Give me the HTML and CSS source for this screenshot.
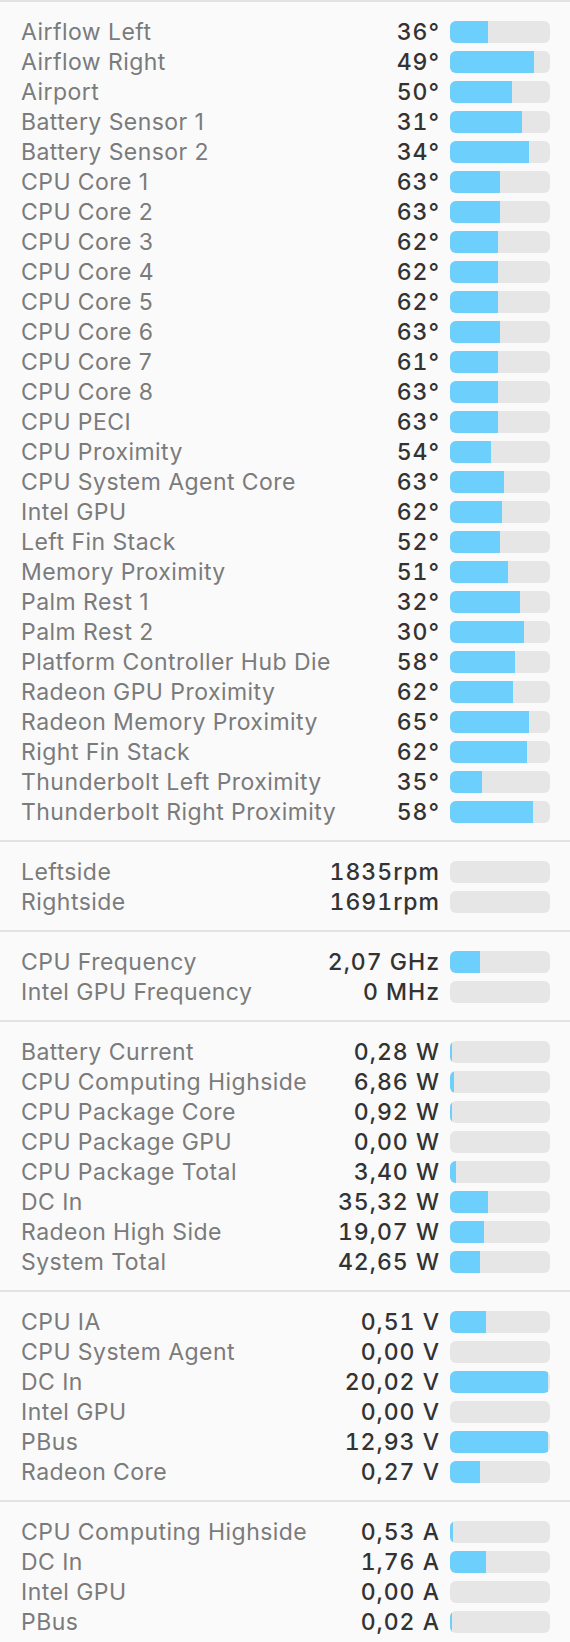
FILE: index.html
```html
<!DOCTYPE html>
<html lang="en">
<head>
<meta charset="utf-8">
<title>Sensors</title>
<link rel="stylesheet" href="styles.css">
</head>
<body>
<div class="panel">
  <section class="group">
    <div class="row"><span class="label">Airflow Left</span><span class="value">36°</span><div class="bar"><div class="fill" style="width:38%"></div></div></div>
    <div class="row"><span class="label">Airflow Right</span><span class="value">49°</span><div class="bar"><div class="fill" style="width:84%"></div></div></div>
    <div class="row"><span class="label">Airport</span><span class="value">50°</span><div class="bar"><div class="fill" style="width:62%"></div></div></div>
    <div class="row"><span class="label">Battery Sensor 1</span><span class="value">31°</span><div class="bar"><div class="fill" style="width:72%"></div></div></div>
    <div class="row"><span class="label">Battery Sensor 2</span><span class="value">34°</span><div class="bar"><div class="fill" style="width:79%"></div></div></div>
    <div class="row"><span class="label">CPU Core 1</span><span class="value">63°</span><div class="bar"><div class="fill" style="width:50%"></div></div></div>
    <div class="row"><span class="label">CPU Core 2</span><span class="value">63°</span><div class="bar"><div class="fill" style="width:50%"></div></div></div>
    <div class="row"><span class="label">CPU Core 3</span><span class="value">62°</span><div class="bar"><div class="fill" style="width:48%"></div></div></div>
    <div class="row"><span class="label">CPU Core 4</span><span class="value">62°</span><div class="bar"><div class="fill" style="width:48%"></div></div></div>
    <div class="row"><span class="label">CPU Core 5</span><span class="value">62°</span><div class="bar"><div class="fill" style="width:48%"></div></div></div>
    <div class="row"><span class="label">CPU Core 6</span><span class="value">63°</span><div class="bar"><div class="fill" style="width:50%"></div></div></div>
    <div class="row"><span class="label">CPU Core 7</span><span class="value">61°</span><div class="bar"><div class="fill" style="width:48%"></div></div></div>
    <div class="row"><span class="label">CPU Core 8</span><span class="value">63°</span><div class="bar"><div class="fill" style="width:48%"></div></div></div>
    <div class="row"><span class="label">CPU PECI</span><span class="value">63°</span><div class="bar"><div class="fill" style="width:48%"></div></div></div>
    <div class="row"><span class="label">CPU Proximity</span><span class="value">54°</span><div class="bar"><div class="fill" style="width:41%"></div></div></div>
    <div class="row"><span class="label">CPU System Agent Core</span><span class="value">63°</span><div class="bar"><div class="fill" style="width:54%"></div></div></div>
    <div class="row"><span class="label">Intel GPU</span><span class="value">62°</span><div class="bar"><div class="fill" style="width:52%"></div></div></div>
    <div class="row"><span class="label">Left Fin Stack</span><span class="value">52°</span><div class="bar"><div class="fill" style="width:50%"></div></div></div>
    <div class="row"><span class="label">Memory Proximity</span><span class="value">51°</span><div class="bar"><div class="fill" style="width:58%"></div></div></div>
    <div class="row"><span class="label">Palm Rest 1</span><span class="value">32°</span><div class="bar"><div class="fill" style="width:70%"></div></div></div>
    <div class="row"><span class="label">Palm Rest 2</span><span class="value">30°</span><div class="bar"><div class="fill" style="width:74%"></div></div></div>
    <div class="row"><span class="label">Platform Controller Hub Die</span><span class="value">58°</span><div class="bar"><div class="fill" style="width:65%"></div></div></div>
    <div class="row"><span class="label">Radeon GPU Proximity</span><span class="value">62°</span><div class="bar"><div class="fill" style="width:63%"></div></div></div>
    <div class="row"><span class="label">Radeon Memory Proximity</span><span class="value">65°</span><div class="bar"><div class="fill" style="width:79%"></div></div></div>
    <div class="row"><span class="label">Right Fin Stack</span><span class="value">62°</span><div class="bar"><div class="fill" style="width:77%"></div></div></div>
    <div class="row"><span class="label">Thunderbolt Left Proximity</span><span class="value">35°</span><div class="bar"><div class="fill" style="width:32%"></div></div></div>
    <div class="row"><span class="label">Thunderbolt Right Proximity</span><span class="value">58°</span><div class="bar"><div class="fill" style="width:83%"></div></div></div>
  </section>
  <section class="group">
    <div class="row"><span class="label">Leftside</span><span class="value">1835rpm</span><div class="bar"><div class="fill" style="width:0%"></div></div></div>
    <div class="row"><span class="label">Rightside</span><span class="value">1691rpm</span><div class="bar"><div class="fill" style="width:0%"></div></div></div>
  </section>
  <section class="group">
    <div class="row"><span class="label">CPU Frequency</span><span class="value">2,07 GHz</span><div class="bar"><div class="fill" style="width:30%"></div></div></div>
    <div class="row"><span class="label">Intel GPU Frequency</span><span class="value">0 MHz</span><div class="bar"><div class="fill" style="width:0%"></div></div></div>
  </section>
  <section class="group">
    <div class="row"><span class="label">Battery Current</span><span class="value">0,28 W</span><div class="bar"><div class="fill" style="width:2%"></div></div></div>
    <div class="row"><span class="label">CPU Computing Highside</span><span class="value">6,86 W</span><div class="bar"><div class="fill" style="width:4%"></div></div></div>
    <div class="row"><span class="label">CPU Package Core</span><span class="value">0,92 W</span><div class="bar"><div class="fill" style="width:2%"></div></div></div>
    <div class="row"><span class="label">CPU Package GPU</span><span class="value">0,00 W</span><div class="bar"><div class="fill" style="width:0%"></div></div></div>
    <div class="row"><span class="label">CPU Package Total</span><span class="value">3,40 W</span><div class="bar"><div class="fill" style="width:6%"></div></div></div>
    <div class="row"><span class="label">DC In</span><span class="value">35,32 W</span><div class="bar"><div class="fill" style="width:38%"></div></div></div>
    <div class="row"><span class="label">Radeon High Side</span><span class="value">19,07 W</span><div class="bar"><div class="fill" style="width:34%"></div></div></div>
    <div class="row"><span class="label">System Total</span><span class="value">42,65 W</span><div class="bar"><div class="fill" style="width:30%"></div></div></div>
  </section>
  <section class="group">
    <div class="row"><span class="label">CPU IA</span><span class="value">0,51 V</span><div class="bar"><div class="fill" style="width:36%"></div></div></div>
    <div class="row"><span class="label">CPU System Agent</span><span class="value">0,00 V</span><div class="bar"><div class="fill" style="width:0%"></div></div></div>
    <div class="row"><span class="label">DC In</span><span class="value">20,02 V</span><div class="bar"><div class="fill" style="width:98%"></div></div></div>
    <div class="row"><span class="label">Intel GPU</span><span class="value">0,00 V</span><div class="bar"><div class="fill" style="width:0%"></div></div></div>
    <div class="row"><span class="label">PBus</span><span class="value">12,93 V</span><div class="bar"><div class="fill" style="width:98%"></div></div></div>
    <div class="row"><span class="label">Radeon Core</span><span class="value">0,27 V</span><div class="bar"><div class="fill" style="width:30%"></div></div></div>
  </section>
  <section class="group">
    <div class="row"><span class="label">CPU Computing Highside</span><span class="value">0,53 A</span><div class="bar"><div class="fill" style="width:3%"></div></div></div>
    <div class="row"><span class="label">DC In</span><span class="value">1,76 A</span><div class="bar"><div class="fill" style="width:36%"></div></div></div>
    <div class="row"><span class="label">Intel GPU</span><span class="value">0,00 A</span><div class="bar"><div class="fill" style="width:0%"></div></div></div>
    <div class="row"><span class="label">PBus</span><span class="value">0,02 A</span><div class="bar"><div class="fill" style="width:2%"></div></div></div>
  </section>
</div>
</body>
</html>
```

FILE: styles.css
```css
html, body {
  margin: 0;
  padding: 0;
  background: #fafafa;
}

body {
  font-family: Inter, "Liberation Sans", sans-serif;
  font-size: 23px;
  line-height: 30px;
}

.panel {
  border-top: 2px solid #e2e2e2;
}

.group {
  padding: 14px 20px 14px 21px;
  border-bottom: 2px solid #e2e2e2;
}

.group:last-child {
  border-bottom: none;
}

.row {
  display: grid;
  grid-template-columns: 1fr auto 100px;
  column-gap: 10px;
  align-items: center;
  height: 30px;
  padding-top: 1px;
  box-sizing: border-box;
}

.label {
  color: #7b7b7b;
  white-space: nowrap;
  letter-spacing: 0.45px;
}

.value {
  color: #333333;
  text-align: right;
  white-space: nowrap;
  font-weight: 500;
  font-variant-numeric: tabular-nums;
  letter-spacing: 1px;
}

.bar {
  height: 22px;
  margin-top: -1px;
  border-radius: 6px;
  background: #e6e6e6;
  overflow: hidden;
}

.fill {
  height: 100%;
  background: #6dcffb;
}
```
